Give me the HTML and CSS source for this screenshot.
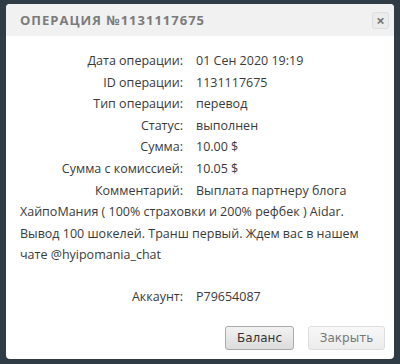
FILE: index.html
```html
<!DOCTYPE html>
<html lang="ru">

<head>
    <meta charset="UTF-8">
    <meta name="viewport" content="width=device-width, initial-scale=1.0">
    <title>Операция №1131117675</title>
    <link rel="stylesheet" href="styles.css">
</head>

<body>
    <div class="modal">
        <div class="modal-header">
            <span class="modal-title">Операция №1131117675</span>
            <span class="close-btn">&times;</span>
        </div>
        <div class="modal-body">
            <div class="row"><span class="label">Дата операции:</span>01 Сен 2020 19:19</div>
            <div class="row"><span class="label">ID операции:</span>1131117675</div>
            <div class="row"><span class="label">Тип операции:</span>перевод</div>
            <div class="row"><span class="label">Статус:</span>выполнен</div>
            <div class="row"><span class="label">Сумма:</span>10.00 $</div>
            <div class="row"><span class="label">Сумма с комиссией:</span>10.05 $</div>
            <div class="row"><span class="label">Комментарий:</span>Выплата партнеру блога ХайпоМания ( 100% страховки и 200% рефбек ) Aidar. Вывод 100 шокелей. Транш первый. Ждем вас в нашем чате @hyipomania_chat</div>
            <div class="row account"><span class="label">Аккаунт:</span>P79654087</div>
        </div>
        <div class="modal-footer">
            <button type="button" class="btn btn-main">Баланс</button>
            <button type="button" class="btn btn-light">Закрыть</button>
        </div>
    </div>
</body>

</html>
```

FILE: styles.css
```css
body {
    margin: 0;
    padding: 4px 6px 5px;
    background-color: #2f3c46;
    font-family: "Open Sans", sans-serif;
    height: 364px;
    box-sizing: border-box;
}

.modal {
    height: 355px;
    background-color: #fff;
    border-radius: 4px;
    display: flex;
    flex-direction: column;
    overflow: hidden;
}

.modal-header {
    height: 32px;
    padding: 0 5px 0 14px;
    background-color: #f1f1f1;
    display: flex;
    justify-content: space-between;
    align-items: center;
}

.modal-title {
    text-transform: uppercase;
    font-weight: 700;
    font-size: 13px;
    letter-spacing: 1px;
    color: #7b7b7b;
}

.close-btn {
    width: 15px;
    height: 15px;
    border: 1px solid #ddd;
    border-radius: 3px;
    background-color: #ececec;
    color: #777;
    font-size: 15px;
    font-weight: 700;
    line-height: 14px;
    text-align: center;
}

.modal-body {
    padding: 14px 14px 0;
    font-size: 12.5px;
    line-height: 21.6px;
    color: #3a3a3a;
}

.label {
    display: inline-block;
    width: 163px;
    margin-right: 13px;
    text-align: right;
}

.account {
    margin-top: 20px;
}

.modal-footer {
    margin-top: auto;
    padding: 0 9px 9px;
    display: flex;
    justify-content: flex-end;
    gap: 14px;
}

.btn {
    height: 24px;
    padding: 0;
    border-radius: 3px;
    font-family: "DejaVu Sans", sans-serif;
    font-size: 12px;
}

.btn-main {
    width: 69px;
    background: linear-gradient(to bottom, #f2f2f2, #dcdcdc);
    border: 1px solid #aaa;
    color: #333;
}

.btn-light {
    width: 77px;
    background: linear-gradient(to bottom, #f8f8f8, #ececec);
    border: 1px solid #ddd;
    color: #777;
}
```
